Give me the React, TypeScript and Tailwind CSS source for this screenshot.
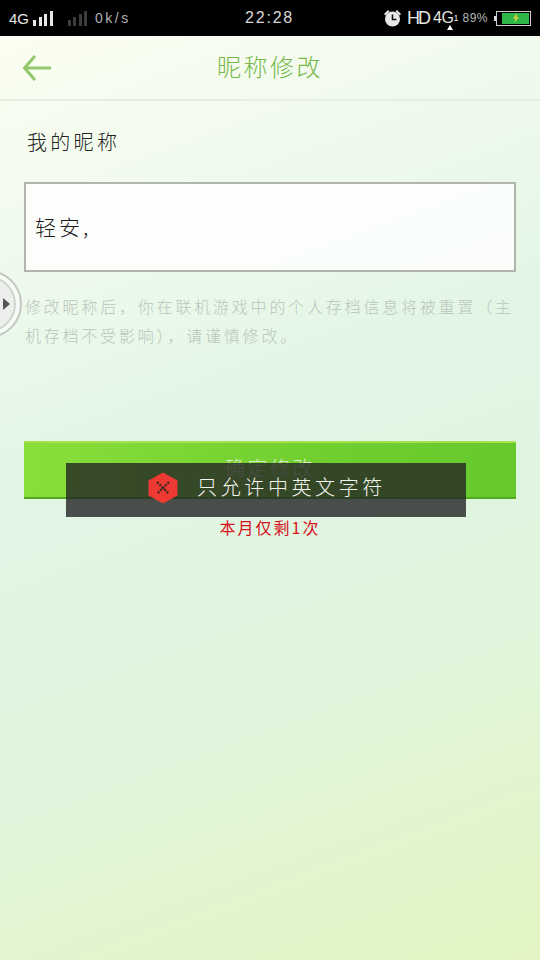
const CJK = "font-['Noto_Sans_CJK_SC','Noto_Sans',sans-serif]";

function SignalBars({ dim }: { dim?: boolean }) {
  const heights = ["h-[6px]", "h-[9px]", "h-[12px]", "h-[15px]"];
  return (
    <div className="flex items-end gap-[2.5px]">
      {heights.map((h) => (
        <div key={h} className={`w-[3px] ${h} ${dim ? "bg-[#3c3c3c]" : "bg-[#e8e8e8]"}`} />
      ))}
    </div>
  );
}

function StatusBar() {
  return (
    <div className="flex h-9 items-center bg-black pl-[9px] pr-[9px] font-['Liberation_Sans',sans-serif] text-[#e6e6e6]">
      <div className="flex w-[236px] items-center">
        <span className="text-[15px] leading-none">4G</span>
        <div className="ml-[4px]"><SignalBars /></div>
        <div className="ml-[15px]"><SignalBars dim /></div>
        <span className="ml-[8px] text-[14px] leading-none tracking-[2.5px] text-[#b0b0b0]">0k/s</span>
      </div>
      <span className="text-[16px] leading-none tracking-[1.8px] text-[#d8d8d8]">22:28</span>
      <div className="ml-auto flex items-center">
        <svg width="19" height="18" viewBox="0 0 19 18" className="mr-[5px]">
          <path d="M1 5 L5 1 L6.5 2.5 L2.5 6.5 Z M18 5 L14 1 L12.5 2.5 L16.5 6.5 Z" fill="#e8e8e8" />
          <circle cx="9.5" cy="10" r="7.5" fill="#e8e8e8" />
          <path d="M9.5 5.5 V10.5 H13.5" fill="none" stroke="#111" strokeWidth="1.6" />
        </svg>
        <span className="text-[18px] leading-none tracking-[-2px]">HD</span>
        <div className="relative ml-[4px] flex items-start">
          <span className="text-[16px] font-normal leading-none tracking-[-0.5px]">4G</span>
          <span className="mt-[4px] text-[9px] leading-none">1</span>
          <div className="absolute left-[14px] top-[15px] h-0 w-0 border-x-[3px] border-b-[5px] border-x-transparent border-b-white" />
        </div>
        <span className="ml-[4px] text-[12px] leading-none tracking-[0.5px] text-[#b8b8b8]">89%</span>
        <div className="ml-[6px] h-[5px] w-[2px] bg-[#ddd]" />
        <div className="flex h-[15px] w-[35px] items-center justify-center border border-[#cfcfcf] bg-black p-[1px]">
          <div className="ml-[4px] flex h-full w-full items-center justify-center bg-[#2fb84a]">
            <svg width="8" height="10" viewBox="0 0 8 10"><path d="M5 0 L1 5.5 H3.5 L2.5 10 L7 4 H4.5 Z" fill="#d8d23a" /></svg>
          </div>
        </div>
      </div>
    </div>
  );
}

function Header() {
  return (
    <div className="relative flex h-[65px] items-center justify-center border-b-2 border-[#e6eee2] pb-[4px]">
      <svg width="30" height="28" viewBox="0 0 30 28" className="absolute left-[22px] top-[18px]">
        <path d="M13 2 L2.5 14 L13 26 M3 14 H29" fill="none" stroke="#93c86e" strokeWidth="3" />
      </svg>
      <span className={`${CJK} text-[24px] font-light leading-none tracking-[2.5px] text-[#76b84a]`}>昵称修改</span>
    </div>
  );
}

export default function App() {
  return (
    <div className={`relative flex h-[960px] w-[540px] flex-col overflow-hidden bg-[linear-gradient(160deg,#fdfff2_0%,#f2fbee_18%,#e0f5e4_45%,#e0f5dc_70%,#e2f5c2_100%)] ${CJK}`}>
      <StatusBar />
      <Header />

      <div className="flex flex-col px-[24px]">
        <p className="mt-[28px] pl-[3px] text-[20px] font-light leading-[26px] tracking-[3.3px] text-[#222]">我的昵称</p>

        <div className="mt-[27px] flex h-[90px] items-center border-2 border-[#b2b5ae] bg-white/80 pl-[9px] text-[21px] font-light tracking-[3px] text-[#1c1c1c]">
          轻安,
        </div>

        <p className="mt-[20px] pl-[1px] text-[16px] font-light leading-[29px] tracking-[2.8px] text-[#b9c5bc]">
          修改昵称后，你在联机游戏中的个人存档信息将被重置（主机存档不受影响），请谨慎修改。
        </p>

        <button className="mt-[91px] h-[58px] border-b-2 border-t-2 border-b-[#52ab1e] border-t-[#a6e24e] bg-[linear-gradient(100deg,#8ade3a_0%,#72d030_55%,#66c82c_100%)] pb-[4px] text-[20px] font-light tracking-[2.5px] text-[#d9ecc6]">
          确定修改
        </button>

        <p className="mt-[18px] text-center text-[16px] leading-[20px] tracking-[2px] text-[#d8101c]">本月仅剩1次</p>
      </div>

      {/* floating ball */}
      <div className="absolute left-[-46px] top-[270px] flex h-[68px] w-[68px] items-center justify-center rounded-full border-2 border-[#c2c8c0] bg-white/50">
        <div className="flex h-[56px] w-[56px] items-center justify-end rounded-full border-2 border-[#d0d4ce] bg-[#ecefec] pr-[4px]">
          <div className="h-0 w-0 border-y-[6px] border-l-[7px] border-y-transparent border-l-[#555]" />
        </div>
      </div>

      {/* toast */}
      <div className="absolute left-[66px] top-[463px] flex h-[54px] w-[400px] items-center justify-center bg-[#242424]/80 pb-[6px] pl-[2px]">
        <svg width="30" height="32" viewBox="0 0 30 32" className="mr-[19px] mt-[2px]">
          <path d="M15 0.5 L29.5 8.5 V23.5 L15 31.5 L0.5 23.5 V8.5 Z" fill="#ee3a32" />
          <path d="M9 10 L21 22 M21 10 L9 22" stroke="#4a2a20" strokeWidth="2.4" strokeDasharray="2.2 1.2" />
        </svg>
        <span className="text-[20px] font-light leading-none tracking-[3.6px] text-[#f5f5f0]">只允许中英文字符</span>
      </div>
    </div>
  );
}
